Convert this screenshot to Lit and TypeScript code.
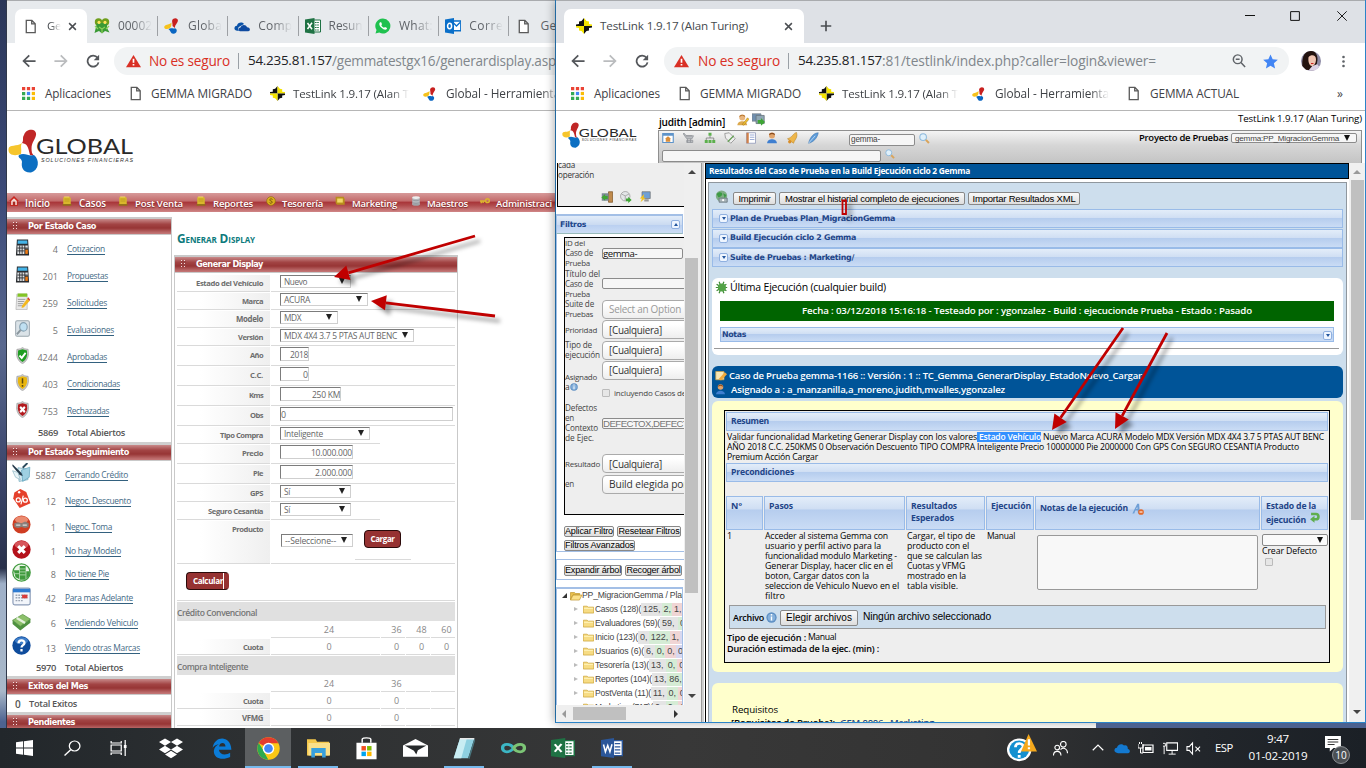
import { LitElement, html, svg, css } from "lit";
import { customElement, property } from "lit/decorators.js";
import { styleMap } from "lit/directives/style-map.js";

/* Text run set to a fixed measure by adjusting its size and tracking. */
@customElement("fit-text")
class FitText extends LitElement {
  @property({ type: Number }) w = 0;
  @property({ type: Number }) gap = 0;
  static styles = css`
    :host { display: inline-block; white-space: pre; flex: none; }
  `;
  firstUpdated() {
    const n = (this.textContent ?? "").length;
    if (this.w && n) {
      let natural = this.getBoundingClientRect().width;
      if (natural > this.w) {
        const size = parseFloat(getComputedStyle(this).fontSize);
        this.style.fontSize = `${size * Math.pow(this.w / natural, 0.5)}px`;
        natural = this.getBoundingClientRect().width;
      }
      this.style.letterSpacing = `${(this.w - natural) / n}px`;
      this.style.width = `${this.w}px`;
    }
    if (this.gap) this.style.marginLeft = `${this.gap}px`;
  }
  render() {
    return html`<slot></slot>`;
  }
}

const t = (s: string, w = 0, gap = 0, cls = "") =>
  html`<fit-text class=${cls} .w=${w} .gap=${gap}>${s}</fit-text>`;

const shield = (fill: string, mark: unknown) => svg`
  <path d="M8 .4 10 1.6 14 2.2 14.4 7C14 11 11.5 14 8 15.8 4.500 14 2 11 1.600 7L2 2.200 6 1.600Z" fill="#c9c9c9" stroke="#888" stroke-width=".5"/>
  <path d="M8 2 12.700 3.400 13 7C12.600 10.500 10.500 12.800 8 14.200 5.500 12.800 3.400 10.500 3 7L3.300 3.400Z" fill=${fill}/>${mark}`;

const ICONS: Record<string, unknown> = {
  doc: svg`<path d="M3.500 1.500H9.500L13 5V14.500H3.500ZM9.300 1.500V5.200H13" fill="#fff" stroke="#5a5a5a" stroke-width="1.400"/>`,
  x: svg`<path d="M2 2 14 14M14 2 2 14" stroke="#4a4d51" stroke-width="2.600" fill="none"/>`,
  plus: svg`<path d="M8 1V15M1 8H15" stroke="#4a4d51" stroke-width="2.200" fill="none"/>`,
  back: svg`<path d="M15.500 8H2M8.300 1.500 1.800 8 8.300 14.500" fill="none" stroke="#54575b" stroke-width="2"/>`,
  fwd: svg`<path d="M.5 8H14M7.700 1.500 14.200 8 7.700 14.500" fill="none" stroke="#babcbe" stroke-width="2"/>`,
  reload: svg`<path d="M13.200 4.400A6.300 6.300 0 1 0 14.300 9.500" fill="none" stroke="#54575b" stroke-width="2"/><path d="M15 .8V7H8.800Z" fill="#54575b"/>`,
  warn: svg`<path d="M8 1 16 15H0Z" fill="#d93025"/><path d="M8 5.500V10M8 11.300V13.200" stroke="#fff" stroke-width="1.800"/>`,
  grid: svg`<path d="M0 0h4v4H0zM6 0h4v4H6zM12 0h4v4h-4z" fill="#ea4335"/><path d="M0 6h4v4H0zM0 12h4v4H0z" fill="#34a853"/><path d="M6 6h4v4H6z" fill="#4285f4"/><path d="M12 6h4v4h-4z" fill="#fbbc05"/><path d="M6 12h4v4H6z" fill="#34a853"/><path d="M12 12h4v4h-4z" fill="#fbbc05"/>`,
  tl: svg`<path d="M8 0V8H0V6.500L3 6V3.500L5.500 3Z" fill="#111"/><path d="M8 0 10.500 3 13 3.500V6L16 6.500V8H8Z" fill="#f4e400"/><path d="M16 8V9.500L13 10V12.500L10.500 13 8 16V8Z" fill="#111"/><path d="M0 8H8V16L5.500 13 3 12.500V10L0 9.500Z" fill="#f4e400"/>`,
  global: svg`<path d="M9 1C12-1 15 1 13.500 4 12 7 11 7 11 10L8.500 8C9 5 7 3 9 1Z" fill="#c8201f"/><path d="M7.500 4.500C7.500 8 7 11 3 11-.5 11-.5 8 2 7 5 6 6 6 7.500 4.500Z" fill="#f6c21c"/><path d="M4.500 11.300C7 9.500 9 11 11 10.200 14 11 13 15.700 9.500 15.800 6.500 16 6.500 12 4.500 11.300Z" fill="#0a66c2"/>`,
  gx: svg`<circle cx="4.500" cy="4" r="3.700" fill="#6f9e1c"/><circle cx="11.500" cy="4" r="3.700" fill="#6f9e1c"/><path d="M3 5H13V10L15.500 14.500 11 13 8 15.500 5 13 .5 15Z" fill="#3a9a35"/><circle cx="5" cy="4.400" r="1.600" fill="#ffe25c"/><circle cx="11" cy="4.400" r="1.600" fill="#ffe25c"/><path d="M5 9 8 11 11 9M8 11V15M1 8 4 11M15 8 12 11" stroke="#8ed05a" stroke-width="1.200" fill="none"/>`,
  cloud: svg`<path d="M2 12.500C-.8 11.500.5 7.500 3 7.800 3.500 4.500 8 3.500 10 6L4.800 9C4 10 4 12 5 13Z" fill="#0a52a8"/><path d="M6 13.200C4 13 4 9.800 6.500 9.600 7.200 6.500 12 6.200 13 9.300 16.500 9.200 16.700 13 14.300 13.200Z" fill="#0f4aa0"/>`,
  xls: svg`<path d="M8 2H15.500V14H8Z" fill="#fff" stroke="#1f7244"/><path d="M10 4.500H14M10 7H14M10 9.500H14M10 12H14" stroke="#1f7244" stroke-dasharray="1.600 .6"/><path d="M0 1.500 9.500 0V16L0 14.500Z" fill="#1f7244"/><path d="M2.500 5 7 11.200M7 4.800 2.500 11" stroke="#fff" stroke-width="1.500"/>`,
  word: svg`<path d="M8 2H15.500V14H8Z" fill="#fff" stroke="#2b579a"/><path d="M10 4.500H14M10 7H14M10 9.500H14M10 12H14" stroke="#2b579a"/><path d="M0 1.500 9.500 0V16L0 14.500Z" fill="#2b579a"/><path d="M1.800 5.200 3.200 11 4.900 6 6.500 11 8 5" stroke="#fff" stroke-width="1.100" fill="none"/>`,
  wa: svg`<path d="M8 .5A7.500 7.500 0 1 1 4.300 14.600L.5 15.600 1.500 12A7.500 7.500 0 0 1 8 .5Z" fill="#1fc14f"/><path d="M5 4.200C3.500 5.700 4.500 8 6.500 9.800 8.500 11.800 10.800 12.500 11.800 11L12 10 10 9 9 9.800C7.800 9.500 6.700 8.300 6.300 7.300L7 6.300 6.200 4.300Z" fill="#fff"/>`,
  outlook: svg`<path d="M7 3H15.800V12.800H7Z" fill="#fff" stroke="#0a6fc9" stroke-width="1.400"/><path d="M8 4.500 11.500 8 15 4.500" stroke="#0a6fc9" fill="none" stroke-width="1.300"/><path d="M0 1.500 9 0V16L0 14.500Z" fill="#0a6fc9"/><ellipse cx="4.600" cy="8" rx="2" ry="2.700" fill="none" stroke="#fff" stroke-width="1.500"/>`,
  mag: svg`<circle cx="6.500" cy="6" r="5" fill="none" stroke="#5f6368" stroke-width="1.700"/><path d="M10.200 9.800 15 14.800M4.300 6H8.700" stroke="#5f6368" stroke-width="1.700"/>`,
  find: svg`<circle cx="6" cy="6" r="4.800" fill="#dff0fb" stroke="#8db9dc" stroke-width="1.500"/><path d="M10 10 14.500 14.500" stroke="#d9a45b" stroke-width="3"/>`,
  star: svg`<path d="M8 .5 10.300 5.700 15.800 6.200 11.600 9.900 12.900 15.400 8 12.500 3.100 15.400 4.400 9.900.2 6.200 5.700 5.700Z" fill="#4285f4"/>`,
  avatar: svg`<circle cx="8" cy="8" r="8" fill="#8e8ba6"/><path d="M1 12C.5 3 4 0 8 0 13 0 14.500 6 12 12L10 15.500 4 15Z" fill="#23130f"/><path d="M6 5C8 2.500 12 3 12 6.500 12 9.500 10.500 12 8.700 12 6.500 12 5.500 8 6 5Z" fill="#efc3b0"/><path d="M6 15.500 9 12 13 10.500 14.500 12.500A8 8 0 0 1 6 15.500Z" fill="#dcd3e6"/><path d="M8 10H10" stroke="#c22" stroke-width=".8"/>`,
  dots: svg`<circle cx="8" cy="2.500" r="1.600" fill="#5f6368"/><circle cx="8" cy="8" r="1.600" fill="#5f6368"/><circle cx="8" cy="13.500" r="1.600" fill="#5f6368"/>`,
  min: svg`<path d="M0 7.200H16" stroke="#111" stroke-width="1.600"/>`,
  max: svg`<path d="M1 1H15V15H1Z" stroke="#111" stroke-width="1.600" fill="none"/>`,
  close: svg`<path d="M.5.500 15.500 15.500M15.500.500.500 15.500" stroke="#111" stroke-width="1.500"/>`,
  home: svg`<path d="M8 0 16 8H14V16H2V8H0Z" fill="#c8251d"/><path d="M8 3.500 12.500 8V14.500H3.500V8Z" fill="#f5dcd6"/><path d="M6 9H10V15H6Z" fill="#a82a20"/>`,
  folderY: svg`<path d="M3 1H12L14 3V13H2V3Z" fill="#d9b72c"/><path d="M4 5H12M4 8H12" stroke="#b5921a"/><path d="M1 13H15V15.500H1Z" fill="#8f7414"/><path d="M3.500 1.500H11.500" stroke="#fbe98a"/>`,
  coin: svg`<circle cx="8" cy="8" r="7" fill="#dcae1d" stroke="#8f6d10"/><path d="M10.500 5.500C9 4 5.500 4.500 6 6.500S10.500 8 10 10 6 12 5.500 10.500" stroke="#6e520b" stroke-width="1.500" fill="none"/>`,
  box: svg`<path d="M1 1H14L15.500 5V14H3L1 11Z" fill="#b98f1c"/><path d="M3.500 4H12.500V10.500H3.500Z" fill="#f2d666"/>`,
  db: svg`<path d="M2 2H14V14H2Z" fill="#b5b9be"/><ellipse cx="8" cy="2.500" rx="6" ry="2.300" fill="#eee"/><ellipse cx="8" cy="13.700" rx="6" ry="2" fill="#9fa3a8"/><path d="M2 6C4 8 12 8 14 6M2 10C4 12 12 12 14 10" stroke="#858a90" fill="none"/>`,
  key: svg`<circle cx="12" cy="7.500" r="3" fill="none" stroke="#dcb52c" stroke-width="2.400"/><path d="M9 8H0M2 8V11.500M5 8V11" stroke="#dcb52c" stroke-width="2.400" fill="none"/>`,
  calc: svg`<path d="M2 .5H14L15 15.500H1Z" fill="#2a2d31"/><path d="M3 1.500H13L13.300 4.500H2.700Z" fill="#45b4e8"/><path d="M2.500 6H10V14H2.500ZM11 6H13.600V9H11Z" fill="#e2e4e6"/><path d="M2.500 8.500H13.600M2.500 11.200H10M5 6V14M7.600 6V14" stroke="#2a2d31" stroke-width=".9"/><path d="M11 10H13.700V14H11Z" fill="#f07c15"/>`,
  note: svg`<path d="M2 1H13V15.500H1Z" fill="#e8e8e8" stroke="#aaa" stroke-width=".6"/><path d="M3 .5H13V3.500H2.500Z" fill="#84c426"/><path d="M3 6H11M3 8H10M3 10H9M3 12H9" stroke="#999" stroke-width=".9"/><path d="M7.500 12 13 5.500 15.500 7.500 9.500 13.500 7 14Z" fill="#f3b81e"/><path d="M13 5.500 14.300 4 16 6 15.500 7.500Z" fill="#d53b2f"/>`,
  search2: svg`<rect x=".7" y=".7" width="14.600" height="14.600" rx="1.500" fill="#dbe3e8" stroke="#9ba6ad"/><circle cx="9" cy="6.500" r="4" fill="#bfe0f2" stroke="#88a2b2" stroke-width="1.200"/><path d="M6 9.500 2 13.500" stroke="#8b979e" stroke-width="2"/>`,
  ok: shield("#1f9d22", svg`<path d="M4.800 8 7.200 10.300 11.300 5.500" stroke="#fff" stroke-width="2" fill="none"/>`),
  cond: shield("#e9b60f", svg`<path d="M8 4V9M8 10.300V12" stroke="#5c4a10" stroke-width="1.600"/>`),
  rej: shield("#b3191d", svg`<path d="M5.500 5.500 10.500 10.500M10.500 5.500 5.500 10.500" stroke="#fff" stroke-width="2.200"/>`),
  pen: svg`<path d="M5 4 12 5 13.500 14 6 15.500Z" fill="#d7ecf4" stroke="#7eb0c2" stroke-width=".7"/><path d="M8 6 15 3.500 14.500 12 9 15.500Z" fill="#9fd0e2" stroke="#5fa2bb" stroke-width=".6"/><path d="M.5 1 8 8.500 9 11 6.500 10 .3 2.500Z" fill="#24394a"/><path d="M.5 6.500 5 8 7 14 3 12Z" fill="#e9f4f8" stroke="#8fb6c4" stroke-width=".6"/><path d="M9 4 13 0" stroke="#2a4a5c" stroke-width="1.500"/>`,
  tag: svg`<path d="M2 3 7 0 12 2.500 15.500 12 6.500 16 1 8Z" fill="#e5402b"/><circle cx="6" cy="2.700" r="1" fill="#fff"/><circle cx="5.300" cy="9.200" r="1.700" fill="none" stroke="#fff" stroke-width="1.100"/><circle cx="11.200" cy="9.400" r="1.700" fill="none" stroke="#fff" stroke-width="1.100"/><path d="M9.500 5.500 7.500 13" stroke="#fff"/>`,
  car: svg`<circle cx="8" cy="8" r="7.600" fill="#cf3d22"/><ellipse cx="8" cy="4" rx="5.500" ry="3" fill="#ea8b70"/><path d="M2 7 5 6 8 7 11 5.500 14 7V10L11 11 8 10 5 11 2 10Z" fill="#8a7f7a"/><path d="M3.500 8.500H7M9 8.500H12.500" stroke="#ddd" stroke-width="1.200"/>`,
  no: svg`<circle cx="8" cy="8" r="7.700" fill="#b5121b"/><ellipse cx="8" cy="4" rx="5.800" ry="3.200" fill="#d7555b"/><path d="M5.200 5.200 10.800 10.800M10.800 5.200 5.200 10.800" stroke="#fff" stroke-width="2.600"/>`,
  coins: svg`<circle cx="8" cy="8" r="7.300" fill="#eef7ec" stroke="#3f9a3d" stroke-width="1.100"/><path d="M1.500 6H6V13.500L3 12ZM6.500 2.500H11.500V14H6.500ZM12 7H15V10.500L12 13.500Z" fill="#3f9a3d"/><path d="M6.500 5H11.500M6.500 7.500H11.500M6.500 10H11.500M2 9H6" stroke="#b9e0b4" stroke-width=".7"/>`,
  cal: svg`<rect x=".8" y="1" width="14.500" height="14" rx="1.500" fill="#f2f5fa" stroke="#8b9cb8"/><path d="M.8 1.500H15.300V4.500H.8Z" fill="#2f7bd1"/><path d="M3 7H13M3 9H13M3 11.500H9" stroke="#9aa4b3" stroke-width="1.200" stroke-dasharray="1.500 .8"/><path d="M8.500 6.500H13V9.500H8.500Z" fill="#d83c3c"/>`,
  cash: svg`<path d="M.5 7 9 2 15.500 6 7 12Z" fill="#8cc06a" stroke="#4d8b35" stroke-width=".6"/><path d="M.5 7 7 12 15.500 6V9L7 15.500.5 10Z" fill="#4f9140"/><path d="M4 5 11 9.300" stroke="#e5f1dc" stroke-width="2"/>`,
  help: svg`<circle cx="8" cy="8" r="7.700" fill="#0f4c9c"/><ellipse cx="8" cy="4" rx="5.500" ry="3" fill="#3f7ec9"/><path d="M5.500 6C5.500 3 10.800 3 10.500 6 10.300 7.700 8 7.700 8 9.700M8 11V13" stroke="#fff" stroke-width="1.900" fill="none"/>`,
  user: svg`<circle cx="8" cy="4.500" r="4" fill="#e0a36a"/><path d="M4 4C4 0 12 0 12 4L8 2.500Z" fill="#8a4b1d"/><path d="M1.500 15C1.500 8 14.500 8 14.500 15Z" fill="#3f7fd0"/>`,
  userEdit: svg`<circle cx="7" cy="4.500" r="4" fill="#e8b57d"/><path d="M3 4C3 0 11 0 11 4L7 2Z" fill="#b4732c"/><path d="M.5 15C.5 8 13.500 8 13.500 15Z" fill="#dca94e"/><path d="M7 14 14 5 16 7 9 15Z" fill="#f2c230" stroke="#8a5f12" stroke-width=".6"/>`,
  pc: svg`<path d="M0 1H11V10H0Z" fill="#6f8fb0" stroke="#7a868f"/><path d="M5 3H15V13H5Z" fill="#8fa6b4" stroke="#68747c"/><path d="M7 8.500H11V6L16 11 11 15.800V13H7Z" fill="#3fa535"/>`,
  win: svg`<path d="M1 2H15V14H1Z" fill="#fff" stroke="#5e93c9" stroke-width="1.500"/><path d="M1 2H15V5H1Z" fill="#5e93c9"/><path d="M8 5.500 12 9H11V13H5V9H4Z" fill="#d98d3a"/>`,
  cart: svg`<path d="M0 2H2L4 5H14L12 9H5ZM5 11H13V14H5Z" fill="#b9bcc0" stroke="#8f9398"/><path d="M4 5H12M6 9V14M10 9V14" stroke="#8f9398"/>`,
  tree: svg`<path d="M8 5V8M3 11V8H13V11" stroke="#777" fill="none"/><path d="M6 1H10V5H6ZM1 10.500H5V14.500H1ZM6 10.500H10V14.500H6ZM11 10.500H15V14.500H11Z" fill="#5cb04d"/>`,
  tagw: svg`<path d="M1 2 7 1 15 9 9 15 2 8Z" fill="#eee" stroke="#888"/><path d="M5 13 13 5" stroke="#5d9c4c" stroke-width="1.500"/>`,
  book: svg`<path d="M2 1H14V15H2Z" fill="#fff" stroke="#8a93b5"/><path d="M2 1H5V15H2Z" fill="#d0814a"/><path d="M6.500 4H12.500M6.500 7H12.500M6.500 10H12.500" stroke="#7c92c8"/>`,
  bell: svg`<path d="M14 .5C9 2 9 7 2 9L10 15C12 9 16 8 14 .5Z" fill="#eeb64a" stroke="#b97e1d" stroke-width=".7"/><circle cx="5" cy="13" r="2.200" fill="#d98d28"/>`,
  pen2: svg`<path d="M15 1C9 1 4 7 2 15 8 14 14 8 15 1Z" fill="#5b9ad8" stroke="#3f74ad" stroke-width=".7"/><path d="M2 15 11 5" stroke="#d9eaf8"/>`,
  door: svg`<path d="M10 1H15.500V15H10Z" fill="#c08a4c" stroke="#7d5426"/><path d="M1 3H10V13H1Z" fill="#7d8a94"/><path d="M9 6.500H5.500V4L.5 8.500 5.500 13V10.500H9Z" fill="#3fa535"/>`,
  cube: svg`<circle cx="7" cy="7" r="6.300" fill="#e4e6e8" stroke="#999"/><path d="M2 4 7 6.500 12 4M7 6.500V13" stroke="#999" fill="none"/><path d="M8 10H11V7.500L15.500 12 11 16V13.500H8Z" fill="#3fa535"/>`,
  pcBolt: svg`<path d="M4 1H15V10H4Z" fill="#6f9fd6" stroke="#777"/><path d="M7 11H13V14H7Z" fill="#999"/><path d="M7 4 1 10H4L2 15 9 9H6Z" fill="#f4c31f"/>`,
  info: svg`<circle cx="8" cy="8" r="7.500" fill="#5f90c4"/><circle cx="8" cy="8" r="5.500" fill="#86b0db"/><path d="M8 3V5M8 6.500V12.500" stroke="#fff" stroke-width="2"/>`,
  folder: svg`<path d="M.5 3.500H6L7.500 5H15.500V14.500H.5Z" fill="#f7dc84" stroke="#c79b27" stroke-width="1"/><path d="M1.500 7H14.500" stroke="#fff3b8" stroke-width="1.600"/>`,
  folderO: svg`<path d="M.5 2.500H6L7.500 4H13V6H4L.5 14Z" fill="#eac04e" stroke="#b88c1e" stroke-width=".9"/><path d="M4 6.500H16L12.500 14.500H.7Z" fill="#fbe08a" stroke="#b88c1e" stroke-width=".9"/>`,
  globe: svg`<circle cx="8" cy="7.500" r="7" fill="#7fae86"/><path d="M2 5C5 1 9 3 9 5S6 9 4 9ZM10 4 14 6 12 10Z" fill="#3c9a44"/><path d="M5 10H15V15H5Z" fill="#a9b4b9" stroke="#66757c"/><circle cx="10" cy="12.500" r="1.300" fill="#fff"/>`,
  bug: svg`<path d="M2 4 14 12M2 12 14 4M1 8H15M5 1 11 15M11 1 5 15" stroke="#3d8a34" stroke-width="1.500"/><circle cx="8.500" cy="8" r="5" fill="#53a347"/>`,
  edit: svg`<path d="M1 2H12V13H1Z" fill="#f7e7b5" stroke="#c7a04a"/><path d="M5 12 13 3 16 5.500 8 14Z" fill="#f0a93a"/>`,
  pasos: svg`<path d="M.5 14 7 1H9.500L10.500 14H8L7.500 10H4.500L3 14ZM5.500 8H7.300L7 5Z" fill="#6f9fd6"/><circle cx="12" cy="12" r="3.800" fill="#e2682a"/><path d="M10 12H14" stroke="#fff" stroke-width="1.400"/>`,
  undo: svg`<path d="M3 3H10C15 3 15 10.500 10 10.500H7" stroke="#5fae4e" stroke-width="3.800" fill="none"/><path d="M8 5.500V15.800L1.500 10.700Z" fill="#5fae4e"/>`,
  start: svg`<path d="M0 2.300 6.700 1.300V7.600H0ZM7.500 1.200 16 0V7.600H7.500ZM0 8.400H6.700V14.700L0 13.700ZM7.500 8.400H16V16L7.500 14.800Z" fill="#fff"/>`,
  lens: svg`<circle cx="10" cy="6" r="5" fill="none" stroke="#fff" stroke-width="1.200"/><path d="M6.300 9.700.5 15.500" stroke="#fff" stroke-width="1.300"/>`,
  taskview: svg`<path d="M1 5H10V11H1ZM1 1V3H10V1M1 15V13H10V15M13.500 0V16" fill="none" stroke="#fff" stroke-width="1.100"/><path d="M12.300 5H14.700V8H12.300Z" fill="#fff"/>`,
  dropbox: svg`<path d="M4 1 8 3.700 4 6.400 0 3.700ZM12 1 16 3.700 12 6.400 8 3.700ZM4 6.400 8 9.100 4 11.800 0 9.100ZM12 6.400 16 9.100 12 11.800 8 9.100ZM8 10 12 12.700 8 15.500 4 12.700Z" fill="#fff"/>`,
  edge: svg`<path d="M.5 7.500C2-2 15-2.500 15.500 9H5.500C6 13 11 13.500 14.500 11.300V14.500C8 17.500 1 15.500 1.500 9.500 2 7 3.500 5.500 5.500 4.800 3 5 1.500 6 .5 7.500ZM5.700 6.500H10.800C10.700 3 6.200 3 5.700 6.500Z" fill="#0b7cd8"/>`,
  chrome: svg`<circle cx="8" cy="8" r="7.800" fill="#fbc816"/><path d="M8 8 1.200 4.200A7.800 7.800 0 0 1 14.900 4.400H8Z" fill="#e33b2e"/><path d="M1.200 4.200 5 10 8 15.800A7.800 7.800 0 0 1 1.200 4.200Z" fill="#2da94f"/><path d="M8 15.800 11.500 10 8 8 4.700 10Z" fill="#fbc816"/><circle cx="8" cy="8" r="4" fill="#fff"/><circle cx="8" cy="8" r="3" fill="#4286f5"/>`,
  explorer: svg`<path d="M0 1H6L7 3H15.500V14H0Z" fill="#f5c84b"/><path d="M1 4H16V14H1Z" fill="#fbe08a"/><path d="M3 8H13V15.500H10.500V12H5.500V15.500H3Z" fill="#38a0dd"/>`,
  store: svg`<path d="M1 4H15V15.500H1Z" fill="#fff"/><path d="M5 4V1.500C5 .3 11 .3 11 1.500V4" stroke="#fff" fill="none"/><path d="M4.500 6.300H7.600V9.400H4.500Z" fill="#f25022"/><path d="M8.400 6.300H11.500V9.400H8.400Z" fill="#7fba00"/><path d="M4.500 10.200H7.600V13.300H4.500Z" fill="#00a4ef"/><path d="M8.400 10.200H11.500V13.300H8.400Z" fill="#ffb900"/>`,
  mail: svg`<path d="M0 5.500 8 0 16 5.500V15H0Z" fill="#fff"/><path d="M1 5.500H15L9.500 9.500 8.500 13 7 9.800Z" fill="#26292b"/>`,
  notepad: svg`<path d="M5 .5H15.500L11 15.500H.5Z" fill="#8ed0e0"/><path d="M5 .5H10L6 15.500H.5Z" fill="#c9edf3"/><path d="M15.500.5 16 2 12 16 11 15.500Z" fill="#4a7780"/><path d="M5 .5H15.500" stroke="#e8e8e8" stroke-width="1.200"/>`,
  inf: svg`<path d="M8 8C6 4 1 4 1 8S6 12 8 8" fill="none" stroke="#3cb6c4" stroke-width="2.200"/><path d="M8 8C10 4 15 4 15 8S10 12 8 8" fill="none" stroke="#7cc576" stroke-width="2.200"/>`,
  helpTray: svg`<circle cx="6.500" cy="9" r="6.500" fill="#fff"/><circle cx="6.500" cy="9" r="5.300" fill="#1590d0"/><path d="M4.500 7.500C4.500 4.500 9 5 8.500 7.500 8 9 6.500 9 6.500 10.800M6.500 12V13.500" stroke="#fff" stroke-width="1.500" fill="none"/><path d="M11.500 0 16 10H7.500Z" fill="#f5a81c"/><path d="M11.700 3V6.500M11.700 7.500V8.700" stroke="#fff" stroke-width="1.200"/>`,
  people: svg`<circle cx="11" cy="3.500" r="3" fill="none" stroke="#fff" stroke-width="1.200"/><circle cx="4.500" cy="7" r="2.500" fill="none" stroke="#fff" stroke-width="1.200"/><path d="M.5 15.500C.5 9.500 8.500 9.500 8.500 15.500M8 9C12 6 15.500 9 15.500 13" fill="none" stroke="#fff" stroke-width="1.200"/>`,
  chev: svg`<path d="M1 11 8 4 15 11" stroke="#fff" stroke-width="1.600" fill="none"/>`,
  od: svg`<path d="M2 12.500C-.8 11.500.5 7.500 3 7.800 3.500 4 8 3 10 5.500 13 4.500 14 7 13.800 9 16.500 9.500 16.500 13 14 13.200H4Z" fill="#1379d0"/>`,
  batt: svg`<path d="M5 5H15V12.500H5Z" fill="none" stroke="#fff" stroke-width="1.200"/><path d="M7 7H13.500V10.500H7Z" fill="#fff"/><path d="M0 4V8H5V4M1.500 2V4M3.500 2V4M2.500 8V13H5" stroke="#fff" fill="none"/>`,
  net: svg`<path d="M4 2H15.500V10H4Z" fill="none" stroke="#fff" stroke-width="1.200"/><path d="M9.700 10V14M6 14H13.500M0 2.500H2.500V5.500H0M1.200 5.500V14" stroke="#fff" fill="none"/>`,
  mute: svg`<path d="M1 6H3.500L7 2V14L3.500 10H1ZM10 6 15 11M15 6 10 11" stroke="#fff" fill="none" stroke-width="1.100"/>`,
  notif: svg`<path d="M0 0H15V12H8L4.500 15.500V12H0Z" fill="#fff"/><path d="M2.500 3.500H12.500M2.500 6H12.500M2.500 8.500H9" stroke="#333" stroke-width="1.200"/>`,
};

const ic = (name: string, w: number, gap = 0, h = w) =>
  html`<svg viewBox="0 0 16 16" preserveAspectRatio="none" style=${styleMap({
    width: `${w}px`, height: `${h}px`, marginLeft: `${gap}px`, flex: "none",
  })}>${ICONS[name]}</svg>`;

const logo = (w: number, h: number) => html`
  <svg viewBox="0 0 126 44" preserveAspectRatio="none" style=${styleMap({ width: `${w}px`, height: `${h}px`, flex: "none" })}>
    <path d="M16 6C18-1 29-1 28 6 27 12 22 14 24 24L26 27 22 26C20 17 19 15 14 14 16 11 14 9 16 6Z" fill="#c02626"/>
    <path d="M14 14C12 17 14 20 13 25 8 27 0 27 .5 20 1 15 9 18 14 14Z" fill="#f6c52c"/>
    <path d="M11 26C17 23 21 28 26 26 32 31 31 41 23 43.500 15 44 13 38 14 33 14 29 9 29 11 26Z" fill="#0c6fc2"/>
    <text x="28" y="25" font-family="Lato" font-size="20.500" textLength="97" lengthAdjust="spacingAndGlyphs" fill="#2a2a2a">GLOBAL</text>
    <text x="33" y="32.500" font-family="Liberation Sans" font-size="5.400" font-style="italic" textLength="92" fill="#333">SOLUCIONES FINANCIERAS</text>
  </svg>`;

const chromeCss = css`
  .row { display: flex; align-items: center; flex: none; }
  .strip { height: 43px; align-items: flex-end; font-size: 12px; color: #5f6368; box-sizing: border-box; border-top: 1px solid #a9abae; }
  .tab { display: flex; align-items: center; height: 34px; box-sizing: border-box; flex: none; }
  .tab.on { background: #fff; border-radius: 7px 7px 0 0; color: #45494d; }
  .tab.sep { border-right: 1px solid #9da0a4; height: 20px; margin-bottom: 7px; }
  .fade { overflow: hidden; white-space: nowrap; -webkit-mask-image: linear-gradient(90deg, #000 55%, transparent); }
  .bar { height: 36px; }
  .pill { height: 28px; background: #f1f3f4; border-radius: 14px; font-size: 14px; display: flex; align-items: center; flex: none; }
  .bad { color: #d93025; }
  .host { color: #202124; }
  .path { color: #80868b; }
  .vr { width: 1px; height: 16px; background: #9aa0a6; flex: none; margin-left: 8px; }
  .marks { height: 29px; padding-bottom: 2px; border-bottom: 1px solid #b6b6b6; font-size: 12px; color: #3f4246; box-sizing: content-box; }
  .cut { overflow: hidden; -webkit-mask-image: linear-gradient(90deg, #000 85%, transparent); white-space: nowrap; }
`;

const marks = (more: boolean) => html`
  <div class="row marks">
    ${ic("grid", 13, 15)}${t("Aplicaciones", 66, 10)}
    ${ic("doc", 15, 17)}${t("GEMMA MIGRADO", 101, 8)}
    ${ic("tl", 15, 18)}<div class="cut">${t("TestLink 1.9.17 (Alan T", 116, 8)}</div>
    ${ic("global", 14, 14)}<div class="cut">${t("Global - Herramienta", 114, 9)}</div>
    ${more ? html`${ic("doc", 15, 17)}${t("GEMMA ACTUAL", 89, 9)}${t("»", 9, 98)}` : ""}
  </div>`;

/* ---------- Gemma window ---------- */
const TABS: [string, string][] = [["gx", "00002"], ["global", "Globa"], ["cloud", "Comp"], ["xls", "Resun"], ["wa", "What:"], ["outlook", "Corre"]];
const MENU: [string, number, string, number, number][] = [
  ["home", 2, "Inicio", 6, 25], ["folderY", 12, "Casos", 7, 27], ["folderY", 12, "Post Venta", 7, 48], ["folderY", 13, "Reportes", 7, 40],
  ["coin", 13, "Tesorería", 6, 41], ["box", 12, "Marketing", 7, 45], ["db", 14, "Maestros", 6, 41], ["key", 12, "Administraci", 6, 56],
];
const CASO: [string, string, string, number, number][] = [
  ["calc", "4", "Cotizacion", 38, 27], ["calc", "201", "Propuestas", 41, 27], ["note", "259", "Solicitudes", 40, 27], ["search2", "5", "Evaluaciones", 47, 27],
  ["ok", "4244", "Aprobadas", 40, 27], ["cond", "403", "Condicionadas", 53, 27], ["rej", "753", "Rechazadas", 42, 27],
];
const SEG: [string, string, string, number, number][] = [
  ["pen", "5887", "Cerrando Crédito", 63, 26], ["tag", "12", "Negoc. Descuento", 66, 26], ["car", "1", "Negoc. Toma", 47, 26], ["no", "1", "No hay Modelo", 56, 23],
  ["coins", "8", "No tiene Pie", 44, 23], ["cal", "42", "Para mas Adelante", 68, 25], ["cash", "6", "Vendiendo Vehiculo", 73, 25], ["help", "13", "Viendo otras Marcas", 75, 24],
];
/* label, label width, kind, value, value width, box width, row height, rule width */
const FIELDS: [string, number, string, string, number, number, number, number][] = [
  ["Estado del Vehículo", 67, "sel", "Nuevo", 23, 71, 18, 184],
  ["Marca", 21, "sel", "ACURA", 26, 88, 18, 184],
  ["Modelo", 27, "sel", "MDX", 17, 58, 18, 184],
  ["Versión", 25, "sel", "MDX 4X4 3.7 5 PTAS AUT BENC", 113, 134, 18, 184],
  ["Año", 13, "num", "2018", 18, 29, 20, 184],
  ["C.C.", 13, "num", "0", 5, 29, 20, 184],
  ["Kms", 14, "num", "250 KM", 28, 61, 20, 184],
  ["Obs", 13, "txt", "0", 5, 173, 20, 184],
  ["Tipo Compra", 43, "sel", "Inteligente", 39, 90, 18, 109],
  ["Precio", 21, "num", "10.000.000", 41, 73, 20, 184],
  ["Pie", 10, "num", "2.000.000", 37, 73, 20, 184],
  ["GPS", 13, "sel", "Sí", 6, 71, 18, 184],
  ["Seguro Cesantía", 55, "sel", "Sí", 6, 71, 18, 109],
];

@customElement("gemma-window")
class GemmaWindow extends LitElement {
  static styles = [chromeCss, css`
    :host { display: flex; flex-direction: column; width: 1089px; height: 728px; overflow: hidden; background: #fff; font-family: "Open Sans", "Noto Sans", sans-serif; line-height: 1; box-shadow: -1px 0 #30384a; }
    .strip { background: #e7eaed; }
    .logo { height: 82px; padding: 18px 0 0 1px; box-sizing: border-box; }
    .menu { height: 19px; background: linear-gradient(#d79a9a, #c26a6a 44%, #a83236 46%, #b04a4c 65%, #d08686); color: #fff; font-size: 10px; font-weight: 600; text-shadow: 0 1px 1px #7a2b2b; }
    .menu fit-text { padding-top: 3px; }
    .menu svg { margin-top: -3px; }
    .page { display: flex; flex: none; height: 516px; }
    .side { width: 165px; margin-top: 5px; border: solid #c9c9c9; border-width: 2px 1px 0 0; box-sizing: border-box; flex: none; height: 511px; overflow: hidden; }
    .head { height: 16px; display: flex; align-items: center; box-sizing: border-box; background: linear-gradient(#c98a8a, #a24444 35%, #973535 60%, #c27474 95%); border-bottom: 1px solid #c9c9c9; color: #fff; font: 900 9px/1 "DejaVu Sans", sans-serif; flex: none; }
    .grip { width: 5px; height: 7px; margin: -2px 10px 0 6px; background: repeating-linear-gradient(transparent 0 1px, #973f3f 1px 3px), repeating-linear-gradient(90deg, #f2dede 0 1px, transparent 1px 3px); flex: none; }
    .case { display: grid; grid-template-columns: 26px 25px 1fr; align-items: center; font-size: 9px; color: #757575; padding-right: 10px; }
    .case .n { text-align: right; padding-top: 2px; }
    .case .l { color: #456a86; border-bottom: 1px solid #33617f; justify-self: start; margin: 3px 0 0 9px; padding-bottom: 1px; line-height: 8px; }
    .seg .case { grid-template-columns: 26px 23px 1fr; }
    .case svg { margin-bottom: 3px; }
    .tot { height: 17px; display: flex; align-items: center; font-size: 10px; font-weight: 600; color: #555; }
    .tot.first { padding-bottom: 1px; }
    .gapline { height: 3px; background: #cfcfcf; }
    .main { margin-left: 2px; width: 284px; padding-top: 20px; flex: none; }
    h1 { margin: 0; font-size: 12px; font-variant: small-caps; color: #0d7a7c; font-weight: 700; height: 14px; padding: 0 0 9px 3px; line-height: 12px; }
    .panel { border: solid #c9c9c9; border-width: 2px 1px 0; height: 474px; box-sizing: border-box; }
    .form { padding: 1px 2px 0; }
    .f { display: flex; box-sizing: border-box; }
    .lab { width: 93px; margin-right: 1px; box-sizing: border-box; padding: 4px 7px 0 0; text-align: right; font-size: 8.5px; font-weight: 700; color: #6d6d6d; background: linear-gradient(90deg, #fff 25%, #efefef); border-bottom: 1px solid #dadada; border-top: 1px solid #fff; background-clip: padding-box; flex: none; }
    .val { border-bottom: 1px solid #dadada; box-sizing: border-box; padding: 1px 0 0 9px; }
    .in { height: 13px; border: 1px solid; border-color: #7c7c7c #cfcfcf #cfcfcf #7c7c7c; box-sizing: border-box; display: flex; align-items: center; font-size: 9px; color: #666; background: #fff; padding: 2px 3px 0; }
    .in.num, .in.txt { height: 14px; padding: 2px 0 0; }
    .in.num { justify-content: flex-end; }
    .ar { width: 0; border: 3px solid transparent; border-top: 6px solid #222; border-bottom: 0; margin: -3px 2px 0 auto; }
    .btn { background: #963232; color: #fff; border: 1px solid #2b0a0a; border-radius: 4px; height: 18px; display: flex; align-items: center; justify-content: center; font-size: 9px; font-weight: 700; box-sizing: border-box; }
    .prod { height: 44px; }
    .prod .val { display: flex; width: 184px; padding: 14px 0 0 10px; align-items: flex-start; }
    .prod .in { width: 72px; padding-right: 0; }
    .prod .in .ar { margin-right: 5px; }
    .second { width: 56px; height: 25px; border-bottom: 1px solid #dadada; margin-left: 2px; }
    .second .btn { width: 37px; margin: -4px 0 0 9px; }
    .calc { height: 37px; padding: 8px 0 0 9px; box-sizing: border-box; border-bottom: 1px solid #dadada; }
    .calc .btn { width: 43px; justify-content: flex-start; padding-left: 6px; border-right-color: #963232; background: linear-gradient(90deg, #963232 36px, #fff 36px 37px, #963232 37px); padding-right: 0; }
    .sub { background: #e0e0e0; height: 19px; margin-top: 1px; display: flex; align-items: center; padding-top: 4px; box-sizing: border-box; font-size: 9.5px; font-weight: 600; color: #757575; }
    .q { display: grid; grid-template-columns: 93px 109px 24px 24px 24px; column-gap: 1px; height: 17px; font-size: 9px; color: #888; }
    .q > span { border-bottom: 1px solid #dadada; display: flex; align-items: center; justify-content: center; padding-left: 7px; }
    .q .lab { margin: 0; padding: 4px 7px 0 0; display: block; }
    .q .none { border-color: transparent; padding: 0; }
  `];
  private cases(rows: typeof CASO) {
    return rows.map(([i, n, l, w, h]) => html`<div class="case" style=${styleMap({ height: `${h}px` })}>
      ${ic(i, rows === SEG ? 19 : 15, rows === SEG ? 5 : 8, rows === SEG ? 19 : 17)}<span class="n">${n}</span><span class="l">${t(l, w)}</span></div>`);
  }
  private head(s: string, w: number) {
    return html`<div class="head"><i class="grip"></i>${t(s, w)}</div>`;
  }
  private quotes(head: string[], rows: [string, number][]) {
    return html`<div class="q"><span class="none"></span>${head.map((h) => html`<span>${h}</span>`)}</div>
      ${rows.map(([l, w]) => html`<div class="q"><span class="lab">${t(l, w)}</span>${head.map((h) => html`<span>${h ? "0" : ""}</span>`)}</div>`)}`;
  }
  render() {
    return html`
      <div class="row strip">
        <div class="tab on" style=${styleMap({ width: "72px", marginLeft: "8px" })}>${ic("doc", 15, 8)}<div class="fade">${t("Ge", 14, 9)}</div>${ic("x", 9, 7)}</div>
        ${TABS.map(([i, s], k) => html`<div class="tab sep" style=${styleMap({ width: k ? "70.300px" : "71px" })}>${ic(i, 16, k ? 6 : 7)}<div class="fade">${t(s, 34, 8)}</div></div>`)}
        <div class="tab">${ic("doc", 15, 7)}${t("Ge", 16, 9)}</div>
      </div>
      <div class="row bar">
        ${ic("back", 14, 15)}${ic("fwd", 14, 18)}${ic("reload", 14, 18)}
        <div class="pill" style=${styleMap({ width: "600px", marginLeft: "14px" })}>${ic("warn", 15, 12, 14)}${t("No es seguro", 81, 8, "bad")}<i class="vr"></i>${t("54.235.81.157", 84, 9, "host")}${t("/gemmatestgx16/generardisplay.asp", 224, 0, "path")}</div>
      </div>
      ${marks(false)}
      <div class="logo">${logo(126, 44)}</div>
      <div class="row menu">${MENU.map(([i, g, s, g2, w]) => html`${ic(i, 10, g)}${t(s, w, g2)}`)}</div>
      <div class="page">
        <div class="side">
          ${this.head("Por Estado Caso", 68)}
          ${this.cases(CASO)}
          <div class="tot first">${t("5869", 20, 31)}${t("Total Abiertos", 58, 9)}</div>
          <div class="gapline"></div>
          ${this.head("Por Estado Seguimiento", 101)}
          <div class="seg">${this.cases(SEG)}</div>
          <div class="tot">${t("5970", 20, 29)}${t("Total Abiertos", 58, 9)}</div>
          <div class="gapline"></div>
          ${this.head("Exitos del Mes", 60)}
          <div class="tot">${t("0", 6, 8)}${t("Total Exitos", 48, 8)}</div>
          <div class="gapline"></div>
          ${this.head("Pendientes", 47)}
        </div>
        <div class="main">
          <h1>${t("Generar Display", 78)}</h1>
          <div class="panel">
            ${this.head("Generar Display", 67)}
            <div class="form">
              ${FIELDS.map(([l, lw, kind, v, vw, bw, h, rw]) => html`<div class="f" style=${styleMap({ height: `${h}px` })}>
                <div class="lab">${t(l, lw)}</div>
                <div class="val" style=${styleMap({ width: `${rw}px` })}><div class="in ${kind}" style=${styleMap({ width: `${bw}px` })}>${t(v, vw)}${kind === "sel" ? html`<i class="ar"></i>` : ""}</div></div>
              </div>`)}
              <div class="f prod"><div class="lab">${t("Producto", 31)}</div>
                <div class="val"><div class="in">${t("--Seleccione--", 51)}<i class="ar"></i></div><div class="second"><div class="btn">${t("Cargar", 24)}</div></div></div>
              </div>
              <div class="calc"><div class="btn">${t("Calcular", 30)}</div></div>
              <div class="sub">${t("Crédito Convencional", 80)}</div>
              ${this.quotes(["24", "36", "48", "60"], [["Cuota", 20]])}
              <div class="sub">${t("Compra Inteligente", 71)}</div>
              ${this.quotes(["24", "36", "", ""], [["Cuota", 20], ["VFMG", 21]])}
            </div>
          </div>
        </div>
      </div>`;
  }
}

/* ---------- TestLink window ---------- */
const TREE: [string, number, string[], number][] = [
  ["Casos (128)(", 46, ["125,", "2,", "1,", "0,"], 52], ["Evaluadores (59)(", 65, ["59,", "0,", "0,"], 44], ["Inicio (123)(", 43, ["0,", "122,", "1,", "0,"], 53],
  ["Usuarios (6)(", 49, ["6,", "0,", "0,", "0"], 40], ["Tesorería (13)(", 54, ["13,", "0,", "0,"], 40], ["Reportes (104)(", 57, ["13,", "86,", "5"], 38],
  ["PostVenta (11)(", 56, ["11,", "0,", "0,"], 38], ["Marketing (717)(", 58, ["0,", "0,", "0,"], 38],
];
const STEP = ["Acceder al sistema Gemma con", "usuario y perfil activo para la", "funcionalidad modulo Marketing -", "Generar Display, hacer clic en el", "boton, Cargar datos con la", "seleccion de Vehiculo Nuevo en el", "filtro"];
const STEP_W = [123, 116, 132, 128, 104, 134, 20];
const RES = ["Cargar, el tipo de", "producto con el", "que se calculan las", "Cuotas y VFMG", "mostrado en la", "tabla visible."];
const RES_W = [68, 62, 75, 58, 59, 51];

@customElement("testlink-window")
class TestlinkWindow extends LitElement {
  static styles = [chromeCss, css`
    :host { display: flex; flex-direction: column; width: 810px; height: 723px; overflow: hidden; background: #fff; box-sizing: border-box; border: solid #2b84c8; border-width: 0 1px 1px 0; font-family: "Open Sans", "Noto Sans", sans-serif; line-height: 1; color: #000; }
    .strip { background: #dee1e6; }
    .ctl { height: 30px; align-self: flex-start; display: flex; align-items: center; }
    .top { height: 52px; display: flex; flex: none; }
    .brand { width: 102px; padding: 11px 0 0 6px; box-sizing: border-box; flex: none; }
    .tl { flex: 1; display: flex; flex-direction: column; padding-right: 3px; }
    .who { height: 19px; display: flex; align-items: center; font-size: 10.500px; }
    .who .me { font-weight: 600; margin-top: 3px; }
    .who svg { margin-top: -2px; }
    .who .ver { font-size: 10px; margin-top: -3px; }
    .tools { border: 1px solid #8f8f8f; border-bottom: 0; background: linear-gradient(#f4f4f4, #d6d6d6 45%, #c4c4c4); height: 33px; box-sizing: border-box; font-size: 10px; font-weight: 600; }
    .tools .row { height: 14px; }
    .fld { border: 1px solid #8b8b8b; border-radius: 2px; background: #f6f6f6; box-sizing: border-box; height: 12px; font: 8.500px/11px "Liberation Sans", sans-serif; color: #444; flex: none; display: flex; align-items: center; }
    .arr { width: 0; border: 3px solid transparent; border-top: 6px solid #111; border-bottom: 0; flex: none; }
    .frames { display: flex; flex: 1; min-height: 0; }
    .left { width: 145px; display: grid; grid-template-columns: 128px 17px; grid-template-rows: 542px 17px; flex: none; }
    .nav { overflow: hidden; }
    .vs, .hs { background: #efefef; display: flex; }
    .vs { flex-direction: column; align-items: center; padding: 7px 2px 0 0; box-sizing: border-box; }
    .up, .dn, .lf, .rt { width: 0; height: 0; border: 4px solid transparent; flex: none; }
    .up { border-bottom-color: #444; border-top: 0; }
    .dn { border-top-color: #444; border-bottom: 0; }
    .vs .thumb { width: 13px; background: #c0c0c0; height: 335px; margin: 84px 0 101px; }
    .hs { grid-column: span 2; align-items: center; }
    .lf { border-right-color: #999; border-left: 0; margin-left: 6px; }
    .rt { border-left-color: #333; border-right: 0; margin-left: 48px; }
    .hs .thumb { width: 53px; height: 13px; background: #c0c0c0; margin-left: 7px; }
    .split { width: 5px; background: linear-gradient(90deg, #9a9a9a 1px, #cfcfcf 1px 3px, #fff 3px 4px, #000 4px); flex: none; }
    .ops { height: 44px; margin-left: 1px; border: solid #000; border-width: 0 0 1px 1px; box-sizing: border-box; background: #eee; font-size: 8.500px; color: #333; line-height: 10px; overflow: hidden; }
    .ops .cut2 { margin-top: -3px; display: flex; flex-direction: column; height: 31px; }
    .ops .row { height: 12px; }
    .fil { margin-top: 7px; border: solid #a3bfe6; border-width: 2px 1px 0; height: 20px; width: 127px; box-sizing: border-box; background: linear-gradient(#e2ecf9, #cbdbf1 50%, #b9cff0 51%, #ccddf5); font: 700 8.500px/1 "DejaVu Sans", sans-serif; color: #1c468c; display: flex; align-items: center; border-bottom: 1px solid #9bb; padding-right: 2px; }
    .sq { width: 9px; height: 9px; border: 1px solid #8fb0e0; border-radius: 2px; background: #eef5ff; display: flex; align-items: center; justify-content: center; box-sizing: border-box; flex: none; }
    .sq i { width: 0; border: 2.500px solid transparent; border-top: 3px solid #23569e; border-bottom: 0; }
    .sq.u i { border-top: 0; border-bottom: 3px solid #23569e; }
    .fbody { border-left: 1px solid #a3bfe6; border-bottom: 1px solid #a3bfe6; height: 318px; box-sizing: border-box; padding: 3px 0 0 7px; }
    .box { border: solid #000; border-width: 1px 0 1px 1px; background: #eee; height: 278px; box-sizing: border-box; font-size: 8.500px; line-height: 10px; color: #444; overflow: hidden; }
    .fr { display: grid; grid-template-columns: 37px 140px; align-items: center; }
    .fr .lb { display: flex; flex-direction: column; }
    .fr .fld { height: 11px; font: 10.500px/9px "Open Sans", sans-serif; color: #111; }
    .big { height: 19px; border: 1px solid #aaa; border-radius: 4px; background: linear-gradient(#fff 20%, #eee); display: flex; align-items: center; padding-left: 6px; font-size: 10.500px; color: #333; box-sizing: border-box; width: 140px; }
    .big.ph { color: #999; }
    .fr .fld.hid { font-family: "Liberation Sans", sans-serif; color: #777; }
    .ckb { width: 8px; height: 8px; border: 1px solid #bbb; border-radius: 1px; background: #e6e6e6; box-sizing: border-box; flex: none; }
    .bts { display: flex; flex-wrap: wrap; gap: 3px; padding-top: 11px; width: 130px; }
    .b { border: 1px solid #888; border-radius: 2px; background: linear-gradient(#f8f8f8, #ddd); height: 11px; box-sizing: border-box; font: 9.500px/9px "Liberation Sans", sans-serif; color: #000; display: flex; align-items: center; justify-content: center; flex: none; }
    .exp { border: 1px solid #a3bfe6; border-right: 0; height: 21px; margin-top: 7px; box-sizing: border-box; display: flex; gap: 3px; padding: 5px 0 0 7px; }
    .trees { border: solid #a3bfe6; border-width: 2px 1px 0 1px; margin-top: 7px; width: 127px; box-sizing: border-box; font: 9px/1 "Liberation Sans", sans-serif; color: #444; overflow: hidden; height: 150px; }
    .tr { height: 14px; display: flex; align-items: center; }
    .tr:first-child { height: 13px; }
    .tri { width: 0; border: 2.500px solid transparent; border-left: 4px solid #bbb; border-right: 0; margin: 0 3px 0 17px; flex: none; }
    .tri0 { width: 0; border-left: 5px solid transparent; border-bottom: 5px solid #333; margin: 0 2px 0 5px; flex: none; }
    .nums { display: flex; flex: none; }
    .nums span { flex: 1 0 auto; padding: 2px 0 2px 2px; background: #e4e4e4; }
    .nums span:nth-child(2) { background: #d5ecd5; }
    .nums span:nth-child(3) { background: #f0d5d5; }
    .nums span:nth-child(4) { background: #d8d8f0; }
    .right { width: 643px; flex: none; overflow: hidden; }
    .title { height: 16px; box-sizing: border-box; border: solid #000; border-width: 1px 1px 1px 0; background: #005498; color: #fff; font-size: 9px; font-weight: 700; display: flex; align-items: center; }
    .sheet { margin: 3px 2px 0 2px; border: solid #8f979e; border-width: 1px 1px 0; background: #cddeed; height: 560px; box-sizing: border-box; padding: 0 3px; }
    .acts { height: 26px; display: flex; align-items: center; padding-top: 5px; box-sizing: border-box; }
    .acts svg { margin-top: -5px; }
    .acts .b, .file .b { height: 13px; font-size: 10px; margin-left: 3px; background: linear-gradient(#f9f9f9, #dedede); }
    .ph1 { border: 1px solid #99bbe8; background: linear-gradient(#e3edf9, #cfdef3 48%, #b6cdee 50%, #cadcf5); box-sizing: border-box; font: 700 8.500px/1 "DejaVu Sans", sans-serif; color: #1f4588; display: flex; align-items: center; height: 19px; }
    .ph1 + .ph1 { margin-top: .5px; }
    .card { border-radius: 6px; flex: none; box-sizing: border-box; }
    .last { background: #fff; height: 77px; margin-top: 11px; padding: 0 9px 0 8px; }
    .last .hd { height: 23px; display: flex; align-items: center; font-size: 11px; margin-left: -5px; padding-bottom: 4px; box-sizing: border-box; }
    .green { height: 20px; background: #006400; color: #fff; font-size: 10px; font-weight: 600; display: flex; align-items: center; justify-content: center; }
    .notas { height: 15px; margin-top: 6px; justify-content: space-between; padding: 1px 1px 0; }
    hr { border: 0; border-top: 1px solid #999; margin: 6px -5px 0 -6px; }
    .blue { background: #005498; color: #fff; height: 32px; margin-top: 11px; font-size: 10px; font-weight: 600; padding: 3px 2px; }
    .blue .row { height: 13px; }
    .blue .row + .row { padding-top: 1px; }
    .yel { background: #ffffcc; margin-top: 3px; height: 271px; padding: 9px 13px 0 12px; }
    .tc { border: 1px solid #000; background: #eee; height: 253px; box-sizing: border-box; padding: 1px; font-size: 9px; line-height: 10px; }
    .tc .ph1, .th { font-family: "Open Sans", sans-serif; font-size: 9px; }
    .tc .ph1 { padding-left: 4px; }
    .ln { display: flex; height: 10px; padding-left: 1px; }
    .txt { padding: 1px 0; height: 32px; box-sizing: border-box; }
    .sel { background: #3390ff; color: #fff; font-weight: 600; }
    .cols { display: grid; grid-template-columns: 37px 141px 79px 48px 225px 67px; column-gap: 1px; }
    .ths { margin-top: 14px; height: 34px; }
    .th { border: 1px solid #99bbe8; background: linear-gradient(#e3edf9, #cfdef3 38%, #b6cdee 40%, #cadcf5); font-weight: 700; color: #1f4588; padding: 3px 0 0 4px; line-height: 11px; }
    .th.pad { padding-top: 6px; }
    .th .row { height: 11px; }
    .th .row.low { margin-top: 1px; height: 13px; align-items: flex-end; }
    .th .row.low svg { margin-bottom: 3px; }
    .tds { height: 75px; padding-top: 1px; box-sizing: border-box; }
    .tds > div { padding-left: 1px; }
    .ta { border: 1px solid #999; border-radius: 2px; background: #f8f8f8; height: 55px; width: 221px; box-sizing: border-box; margin: 4px 0 0 1px; }
    .ss { height: 12px; border: 1px solid #888; border-radius: 2px; background: #fafafa; display: flex; align-items: center; justify-content: flex-end; padding-right: 4px; box-sizing: border-box; margin: 3px 0 0; }
    .file { margin: 0 2px 3px 3px; border: 1px solid #999; background: #cddeed; height: 24px; box-sizing: border-box; display: flex; align-items: center; font: 10.500px/1 "Liberation Sans", sans-serif; padding-top: 1px; }
    .file .b { height: 16px; }
    .file .ar2 { font: 600 9.500px/1 "Open Sans", sans-serif; }
    .meta { font-weight: 600; font-size: 9.500px; line-height: 11px; height: 11px; padding-left: 1px; display: flex; }
    .meta .plain { font-weight: 400; }
    .req { height: 80px; margin-top: 11px; padding: 20px 0 0 20px; font-size: 10px; line-height: 13px; }
    .req .b2 { display: flex; margin-left: -1px; font-weight: 600; }
    .req .lk { color: #1f4588; }
    .rs { width: 16px; background: #f0f0f0; display: flex; flex-direction: column; align-items: center; padding-top: 7px; box-sizing: border-box; }
    .rs .thumb { width: 13px; background: #c0c0c0; height: 340px; margin: 6px 0 190px; }
    .rs .up { border-bottom-color: #999; }
    .grow { flex: 1; }
  `];
  private fr(h: number, lines: [string, number][], body: unknown) {
    return html`<div class="fr" style=${styleMap({ height: `${h}px` })}><div class="lb">${lines.map(([s, w]) => html`<div>${t(s, w)}</div>`)}</div><div>${body}</div></div>`;
  }
  private big(s: string, w: number, cls = "") {
    return html`<div class="big ${cls}">${t(s, w)}</div>`;
  }
  private btn(s: string, w: number, bw: number) {
    return html`<div class="b" style=${styleMap({ width: `${bw}px` })}>${t(s, w)}</div>`;
  }
  private nav() {
    return html`<div class="nav">
      <div class="ops"><div class="cut2"><div>${t("cada", 17)}</div><div>${t("operación", 36)}</div></div><div class="row">${ic("door", 12, 43)}${ic("cube", 12, 7)}${ic("pcBolt", 12, 7)}</div></div>
      <div class="fil">${t("Filtros", 26, 3)}<span class="grow"></span><span class="sq u"><i></i></span></div>
      <div class="fbody"><div class="box">
        ${this.fr(30, [["ID del", 20], ["Caso de", 28], ["Prueba", 25]], html`<div class="fld" style=${styleMap({ width: "81px" })}>${t("gemma-", 34)}</div>`)}
        ${this.fr(31, [["Título del", 35], ["Caso de", 28], ["Prueba", 25]], html`<div class="fld"></div>`)}
        ${this.fr(20, [["Suite de", 29], ["Pruebas", 28]], this.big("Select an Option", 72, "ph"))}
        ${this.fr(21, [["Prioridad", 32]], this.big("[Cualquiera]", 53))}
        ${this.fr(20, [["Tipo de", 27], ["ejecución", 35]], this.big("[Cualquiera]", 53))}
        <div class="fr" style=${styleMap({ height: "43px" })}><div class="lb"><div>${t("Asignado", 32)}</div><div class="row">${t("a", 5)}${ic("info", 8)}</div></div>
          <div>${this.big("[Cualquiera]", 53)}<div class="row" style=${styleMap({ height: "23px", paddingTop: "4px", boxSizing: "border-box" })}><i class="ckb"></i>${t("incluyendo Casos de", 72, 4)}</div></div></div>
        ${this.fr(40, [["Defectos", 32], ["en", 9], ["Contexto", 33], ["de Ejec.", 29]], html`<div class="fld hid">${t("DEFECTOX,DEFECTOY", 98)}</div>`)}
        <div style=${styleMap({ height: "10px" })}></div>
        ${this.fr(21, [["Resultado", 35]], this.big("[Cualquiera]", 53))}
        ${this.fr(20, [["en", 9]], this.big("Build elegida por defecto", 116))}
      </div>
      <div class="bts">${this.btn("Aplicar Filtro", 48, 50)}${this.btn("Resetear Filtros", 61, 64)}${this.btn("Filtros Avanzados", 69, 71)}</div></div>
      <div class="exp">${this.btn("Expandir árbol", 56, 58)}${this.btn("Recoger árbol", 54, 57)}</div>
      <div class="trees">
        <div class="tr"><i class="tri0"></i>${ic("folderO", 12, 1, 10)}${t("PP_MigracionGemma / Plan_M", 116)}</div>
        ${TREE.map(([s, w, n, nw]) => html`<div class="tr"><i class="tri"></i>${ic("folder", 11, 2, 10)}${t(s, w, 1)}<span class="nums" style=${styleMap({ width: `${nw}px` })}>${n.map((x) => html`<span>${x}</span>`)}</span>${s[0] === "U" ? ")" : ""}</div>`)}
      </div>
    </div>`;
  }
  private ph(s: string, w: number) {
    return html`<div class="ph1">${t("", 0, 6)}<span class="sq"><i></i></span>${t(s, w, 2)}</div>`;
  }
  render() {
    const bar: [string, number][] = [["win", 3], ["cart", 9], ["tree", 9], ["tagw", 8], ["book", 9], ["user", 9], ["bell", 8], ["pen2", 9]];
    return html`
      <div class="row strip">
        <div class="tab on" style=${styleMap({ width: "240px", marginLeft: "8px" })}>${ic("tl", 16, 12)}${t("TestLink 1.9.17 (Alan Turing)", 148, 8)}${ic("x", 9, 36)}</div>
        <div class="tab">${ic("plus", 12, 16)}</div>
        <span class="grow"></span>
        <div class="ctl">${ic("min", 10)}${ic("max", 10, 35)}${ic("close", 10, 37)}${t("", 0, 18)}</div>
      </div>
      <div class="row bar">
        ${ic("back", 14, 15)}${ic("fwd", 14, 18)}${ic("reload", 14, 18)}
        <div class="pill" style=${styleMap({ width: "625px", marginLeft: "15px" })}>${ic("warn", 15, 10, 14)}${t("No es seguro", 82, 9, "bad")}<i class="vr"></i>${t("54.235.81.157", 84, 9, "host")}${t(":81/testlink/index.php?caller=login&viewer=", 274, 0, "path")}${ic("mag", 14, 76)}${ic("star", 15, 17)}</div>
        ${ic("avatar", 20, 12)}${ic("dots", 13, 16)}
      </div>
      ${marks(true)}
      <div class="top">
        <div class="brand">${logo(75, 26)}</div>
        <div class="tl">
          <div class="who">${t("judith [admin]", 66, 1, "me")}${ic("userEdit", 12, 12)}${ic("pc", 13, 3)}<span class="grow"></span>${t("TestLink 1.9.17 (Alan Turing)", 124, 0, "ver")}</div>
          <div class="tools">
            <div class="row">${bar.map(([n, g]) => ic(n, 12, g, 12))}<div class="fld" style=${styleMap({ width: "66px", marginLeft: "30px", marginTop: "3px" })}>${t("gemma-", 29, 1)}</div>${ic("find", 11, 4)}
              <span class="grow"></span>${t("Proyecto de Pruebas", 89)}<div class="fld" style=${styleMap({ width: "126px", margin: "0 4px 0 3px", height: "10px", justifyContent: "space-between" })}>${t("gemma:PP_MigracionGemma", 104, 3)}<i class="arr"></i>${t("", 0, 1)}</div></div>
            <div class="row" style=${styleMap({ height: "18px" })}><div class="fld" style=${styleMap({ width: "219px", marginLeft: "3px", marginTop: "3px" })}></div>${ic("find", 10, 4)}</div>
          </div>
        </div>
      </div>
      <div class="frames">
        <div class="left">${this.nav()}
          <div class="vs"><i class="up"></i><i class="thumb"></i><i class="dn"></i></div>
          <div class="hs"><i class="lf"></i><i class="thumb"></i><i class="rt"></i></div>
        </div>
        <i class="split"></i>
        <div class="right">
          <div class="title">${t("Resultados del Caso de Prueba en la Build Ejecución ciclo 2 Gemma", 261, 3)}</div>
          <div class="sheet">
            <div class="acts">${ic("globe", 13, 3)}${t("", 0, 2)}${this.btn("Imprimir", 32, 43)}${this.btn("Mostrar el historial completo de ejecuciones", 174, 186)}${this.btn("Importar Resultados XML", 103, 112)}</div>
            ${this.ph("Plan de Pruebas Plan_MigracionGemma", 165)}${this.ph("Build Ejecución ciclo 2 Gemma", 126)}${this.ph("Suite de Pruebas : Marketing/", 124)}
            <div class="card last">
              <div class="hd">${ic("bug", 13)}${t("Última Ejecución (cualquier build)", 156, 2)}</div>
              <div class="green">${t("Fecha : 03/12/2018 15:16:18 - Testeado por : ygonzalez - Build : ejecucionde Prueba - Estado : Pasado", 450)}</div>
              <div class="ph1 notas">${t("Notas", 24)}<span class="sq"><i></i></span></div>
              <hr>
            </div>
            <div class="card blue">
              <div class="row">${ic("edit", 12, 1)}${t("Caso de Prueba gemma-1166 :: Versión : 1 :: TC_Gemma_GenerarDisplay_EstadoNuevo_Cargar", 413, 2)}</div>
              <div class="row">${ic("user", 11, 1)}${t("Asignado a : a_manzanilla,a_moreno,judith,mvalles,ygonzalez", 274, 5)}</div>
            </div>
            <div class="card yel"><div class="tc">
              <div class="ph1">${t("Resumen", 38)}</div>
              <div class="txt">
                <div class="ln">${t("Validar funcionalidad Marketing Generar Display con los valores", 250)}${t(" Estado Vehículo", 64, 0, "sel")}${t(" Nuevo Marca ACURA Modelo MDX Versión MDX 4X4 3.7 5 PTAS AUT BENC", 283)}</div>
                <div class="ln">${t("AÑO 2018 C.C. 250KMS 0 Observación Descuento TIPO COMPRA Inteligente Precio 10000000 Pie 2000000 Con GPS Con SEGURO CESANTIA Producto", 572)}</div>
                <div class="ln">${t("Premium Acción Cargar", 91)}</div>
              </div>
              <div class="ph1">${t("Precondiciones", 63)}</div>
              <div class="cols ths">
                <div class="th">${t("Nº", 11)}</div><div class="th">${t("Pasos", 24)}</div><div class="th">${t("Resultados", 46)}<br>${t("Esperados", 43)}</div><div class="th">${t("Ejecución", 40)}</div>
                <div class="th pad"><div class="row">${t("Notas de la ejecución", 88)}${ic("pasos", 12, 4)}</div></div>
                <div class="th">${t("Estado de la", 50)}<div class="row low">${t("ejecución", 40)}${ic("undo", 11, 3)}</div></div>
              </div>
              <div class="cols tds">
                <div>1</div>
                <div>${STEP.map((s, i) => html`<div>${t(s, STEP_W[i])}</div>`)}</div>
                <div>${RES.map((s, i) => html`<div>${t(s, RES_W[i])}</div>`)}</div>
                <div>${t("Manual", 28)}</div>
                <div><div class="ta"></div></div>
                <div><div class="ss"><i class="arr"></i></div>${t("Crear Defecto", 55)}<div class="ckb" style=${styleMap({ marginLeft: "3px", marginTop: "2px" })}></div></div>
              </div>
              <div class="file">${t("Archivo", 31, 3, "ar2")}${ic("info", 11, 2)}${this.btn("Elegir archivos", 66, 78)}${t("Ningún archivo seleccionado", 128, 5)}</div>
              <div class="meta">${t("Tipo de ejecución :", 79)}${t(" Manual", 30, 0, "plain")}</div>
              <div class="meta">${t("Duración estimada de la ejec. (min) :", 152)}</div>
            </div></div>
            <div class="card yel req"><div>${t("Requisitos", 46)}</div><div class="b2">${t("[Requisitos de Prueba]:", 104)}${t("GEM-0006 - Marketing", 94, 5, "lk")}</div></div>
          </div>
        </div>
        <div class="rs"><i class="up"></i><i class="thumb"></i><i class="dn"></i></div>
      </div>`;
  }
}

/* ---------- Taskbar ---------- */
/* icon, icon width, icon height, slot width, state */
const APPS: [string, number, number, number, string][] = [
  ["start", 17, 16, 49, ""], ["lens", 17, 16, 46, ""], ["taskview", 18, 16, 48, ""], ["dropbox", 24, 22, 55, ""], ["edge", 20, 21, 47, ""],
  ["chrome", 23, 23, 46, "on"], ["explorer", 23, 20, 54, "run"], ["store", 23, 23, 43, ""], ["mail", 25, 19, 54, ""], ["notepad", 22, 21, 43, "run"],
  ["inf", 25, 20, 57, ""], ["xls", 24, 20, 42, ""], ["word", 22, 20, 56, "run"],
];
@customElement("task-bar")
class TaskBar extends LitElement {
  static styles = css`
    :host { display: flex; align-items: center; height: 40px; width: 1366px; background: linear-gradient(90deg, #22272b, #2d3032 18%, #383838 50%, #333 72%, #22262b 88%, #1b2026); color: #fff; font: 12px/1 "Open Sans", sans-serif; }
    .slot { height: 40px; display: flex; align-items: center; justify-content: center; box-sizing: border-box; flex: none; }
    .on { background: linear-gradient(#5c5f61 0 38px, #76b9ed 38px); }
    .run { background: linear-gradient(#76b9ed, #76b9ed) bottom / 40px 2px no-repeat; }
    .grow { flex: 1; }
    .clock { display: flex; flex-direction: column; align-items: center; gap: 6px; margin: -1px 0 0 15px; width: 60px; font-size: 12px; }
    .bell { display: flex; margin-left: 17px; width: 41px; }
    .badge { width: 18px; height: 18px; border-radius: 50%; background: #4a4f53; border: 1px solid #8b8f93; box-sizing: border-box; font-size: 10px; display: flex; align-items: center; justify-content: center; margin: 10px 0 -3px -10px; }
  `;
  render() {
    return html`${APPS.map(([n, w, h, s, st]) => html`<div class="slot ${st}" style=${styleMap({ width: `${s}px` })}>${ic(n, w, 0, h)}</div>`)}
      <span class="grow"></span>
      ${ic("helpTray", 30, 0, 28)}${ic("people", 15, 16)}${ic("chev", 12, 24)}${ic("od", 16, 10)}${ic("batt", 16, 8)}${ic("net", 15, 9)}${ic("mute", 15, 8)}${t("ESP", 18, 14)}
      <div class="clock">${t("9:47", 22)}${t("01-02-2019", 59)}</div>
      <div class="bell">${ic("notif", 17, 0, 16)}<span class="badge">10</span></div>`;
  }
}

const arrow = (x1: number, y1: number, x2: number, y2: number) => {
  const a = Math.atan2(y2 - y1, x2 - x1), l = 15, h = 7.500;
  const bx = x2 - l * Math.cos(a), by = y2 - l * Math.sin(a);
  const px = h * Math.sin(a), py = h * Math.cos(a);
  return svg`<path d="M${x1} ${y1}L${bx} ${by}" stroke="#c00000" stroke-width="2.800"/><path d="M${x2} ${y2}L${bx - px} ${by + py}L${bx + px} ${by - py}Z" fill="#c00000"/>`;
};

@customElement("app-root")
class AppRoot extends LitElement {
  static styles = css`
    :host { display: block; position: relative; width: 1366px; height: 768px; overflow: hidden; background: linear-gradient(#2a3658, #3c4a78 25%, #59688f 45%, #3a456b 62%, #28304a 74%, #9fb0c8 76%, #a9b8c9 90%, #4d6390 94%); }
    gemma-window { position: absolute; left: 7px; top: 0; }
    testlink-window { position: absolute; left: 556px; top: 0; box-shadow: -2px 0 9px rgba(0, 0, 0, .32), -1px 0 #2b84c8; }
    task-bar { position: absolute; left: 0; top: 728px; }
    .ink { position: absolute; inset: 0; filter: drop-shadow(5px 5px 2px rgba(0, 0, 0, .4)); pointer-events: none; }
    .desk { position: absolute; left: 1096px; top: 723px; width: 270px; height: 5px; background: #4b6190; }
  `;
  render() {
    return html`<gemma-window></gemma-window><testlink-window></testlink-window><div class="desk"></div><task-bar></task-bar>
      <svg class="ink" width="1366" height="768" fill="none">
        ${arrow(475, 236, 334, 277)}${arrow(495, 316, 371, 301)}${arrow(1123, 328, 1052, 430)}${arrow(1167, 333, 1115, 429)}
        <path d="M842.500 200.500H846V214H842.500Z" stroke="#c00000" stroke-width="1.800"/>
      </svg>`;
  }
}
